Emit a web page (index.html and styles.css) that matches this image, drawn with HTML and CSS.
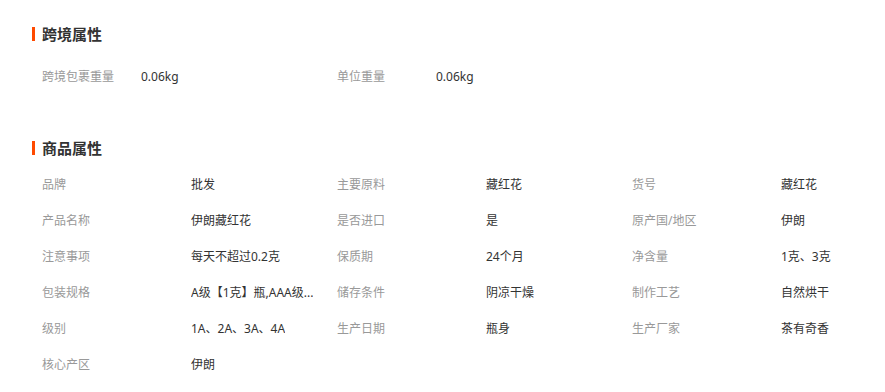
FILE: index.html
```html
<!DOCTYPE html>
<html lang="zh-CN">
<head>
<meta charset="utf-8">
<title>属性</title>
<link rel="stylesheet" href="styles.css">
</head>
<body>
<div class="page">
  <section class="sec sec-cross">
    <h2 class="sec-title">跨境属性</h2>
    <div class="rows">
      <div class="item"><span class="label">跨境包裹重量</span><span class="value">0.06kg</span></div>
      <div class="item"><span class="label">单位重量</span><span class="value">0.06kg</span></div>
    </div>
  </section>
  <section class="sec sec-goods">
    <h2 class="sec-title">商品属性</h2>
    <div class="rows">
      <div class="item"><span class="label">品牌</span><span class="value">批发</span></div>
      <div class="item"><span class="label">主要原料</span><span class="value">藏红花</span></div>
      <div class="item"><span class="label">货号</span><span class="value">藏红花</span></div>
      <div class="item"><span class="label">产品名称</span><span class="value">伊朗藏红花</span></div>
      <div class="item"><span class="label">是否进口</span><span class="value">是</span></div>
      <div class="item"><span class="label">原产国/地区</span><span class="value">伊朗</span></div>
      <div class="item"><span class="label">注意事项</span><span class="value">每天不超过0.2克</span></div>
      <div class="item"><span class="label">保质期</span><span class="value">24个月</span></div>
      <div class="item"><span class="label">净含量</span><span class="value">1克、3克</span></div>
      <div class="item"><span class="label">包装规格</span><span class="value">A级【1克】瓶,AAA级...</span></div>
      <div class="item"><span class="label">储存条件</span><span class="value">阴凉干燥</span></div>
      <div class="item"><span class="label">制作工艺</span><span class="value">自然烘干</span></div>
      <div class="item"><span class="label">级别</span><span class="value">1A、2A、3A、4A</span></div>
      <div class="item"><span class="label">生产日期</span><span class="value">瓶身</span></div>
      <div class="item"><span class="label">生产厂家</span><span class="value">茶有奇香</span></div>
      <div class="item"><span class="label">核心产区</span><span class="value">伊朗</span></div>
    </div>
  </section>
</div>
</body>
</html>
```
FILE: styles.css
```css
* { box-sizing: border-box; }
html, body { margin: 0; padding: 0; background: #fff; }
body {
  font-family: "Noto Sans", "Noto Sans CJK SC", sans-serif;
  font-size: 12px;
  color: #333;
}
.page {
  padding: 24px 32px 0 32px;
}
.sec-title {
  margin: 0;
  display: flex;
  align-items: center;
  height: 20px;
  font-size: 15px;
  font-weight: bold;
  color: #333;
  line-height: 20px;
}
.sec-title::before {
  content: "";
  display: block;
  width: 3px;
  height: 14px;
  background: #ff4a00;
  margin-right: 7px;
}
.rows {
  display: grid;
  grid-template-columns: 295px 295px 1fr;
  padding-left: 10px;
}
.item {
  display: flex;
  height: 36px;
  line-height: 36px;
  white-space: nowrap;
}
.label {
  color: #999;
  flex: none;
}
.value {
  color: #333;
  overflow: hidden;
  text-overflow: ellipsis;
}
.sec-cross .rows { margin-top: 15px; }
.sec-cross .label { width: 99px; }
.sec-goods { margin-top: 43px; }
.sec-goods .rows { margin-top: 9px; }
.sec-goods .label { width: 149px; }
```
